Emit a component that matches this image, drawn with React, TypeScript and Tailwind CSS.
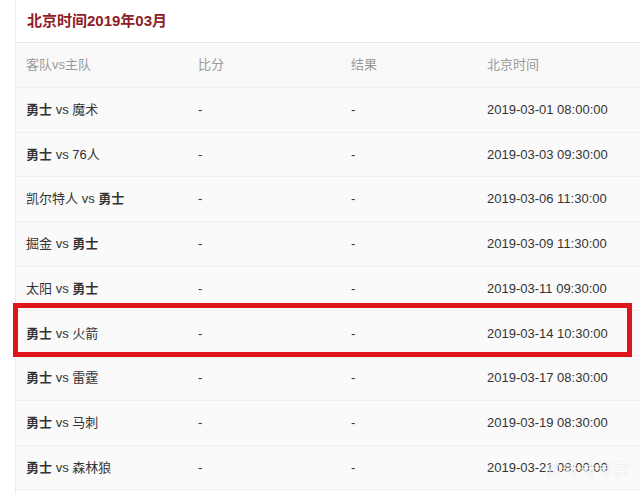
import React from "react";

type Row = { away: string; home: string; time: string };

const rows: Row[] = [
  { away: "勇士", home: "魔术", time: "2019-03-01 08:00:00" },
  { away: "勇士", home: "76人", time: "2019-03-03 09:30:00" },
  { away: "凯尔特人", home: "勇士", time: "2019-03-06 11:30:00" },
  { away: "掘金", home: "勇士", time: "2019-03-09 11:30:00" },
  { away: "太阳", home: "勇士", time: "2019-03-11 09:30:00" },
  { away: "勇士", home: "火箭", time: "2019-03-14 10:30:00" },
  { away: "勇士", home: "雷霆", time: "2019-03-17 08:30:00" },
  { away: "勇士", home: "马刺", time: "2019-03-19 08:30:00" },
  { away: "勇士", home: "森林狼", time: "2019-03-21 08:00:00" },
];

const Team = ({ name }: { name: string }) =>
  name === "勇士" ? <span className="font-bold">{name}</span> : <span>{name}</span>;

export default function App() {
  return (
    <div
      className="relative w-[640px] h-[494px] overflow-hidden bg-white"
      style={{ fontFamily: '"Liberation Sans", "Noto Sans CJK SC", sans-serif' }}
    >
      <div className="ml-[15px] border-l border-[#ebebeb] h-full">
        <div className="h-[43px] flex items-center pl-[11px] text-[15px] font-bold text-[#8e2025] border-b border-[#e6e6e6]">
          北京时间2019年03月
        </div>
        <div className="grid grid-cols-[172px_153px_136px_1fr] h-[45px] items-center pl-[10px] bg-[#f9f9f9] border-b border-[#f0f0f0] text-[13px] text-[#999]">
          <div>客队vs主队</div>
          <div>比分</div>
          <div>结果</div>
          <div>北京时间</div>
        </div>
        {rows.map((r, i) => (
          <div
            key={i}
            className="grid grid-cols-[172px_153px_136px_1fr] h-[44.7px] items-center pl-[10px] bg-[#fafafa] border-b border-[#f0f0f0] text-[13px] text-[#333]"
          >
            <div>
              <Team name={r.away} /> vs <Team name={r.home} />
            </div>
            <div>-</div>
            <div>-</div>
            <div>{r.time}</div>
          </div>
        ))}
      </div>
      <div className="absolute left-[13px] top-[303px] w-[619px] h-[54px] border-[5px] border-[#e0141b]" />
      <div
        className="absolute right-[10px] bottom-[12px] text-[17px] text-white opacity-70"
        style={{ textShadow: "0 0 1px #bbb" }}
      >
        @号号号言
      </div>
    </div>
  );
}
